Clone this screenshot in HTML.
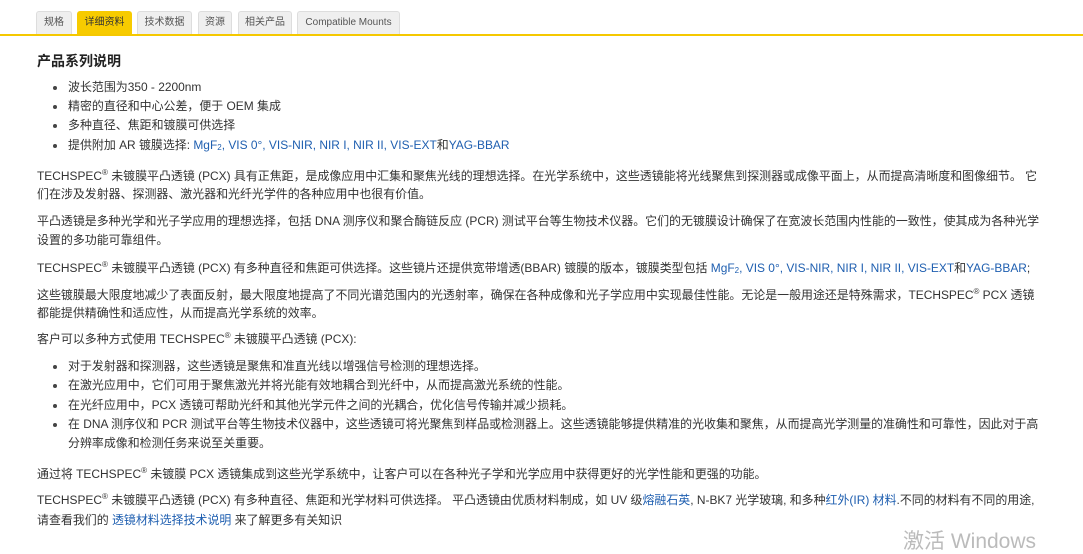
<!DOCTYPE html>
<html><head><meta charset="utf-8"><style>
body{margin:0;width:1083px;height:553px;overflow:hidden;background:#fff;font-family:"Liberation Sans","Noto Sans CJK SC",sans-serif;color:#333;font-size:11.95px}
.tabs{position:absolute;top:11px;left:0;height:23px;width:1083px;border-bottom:2px solid #f5c800}
.tab{position:absolute;top:0;height:22px;line-height:22px;background:#efefef;border:1px solid #ddd;border-bottom:none;border-radius:3px 3px 0 0;font-size:10px;color:#555;text-align:center}
.tab.a{background:#f7cb00;border-color:#f7cb00;color:#333}
.l{position:absolute;left:37px;white-space:nowrap;line-height:18px}
.b{left:68px}
.b::before{content:"";position:absolute;left:-15px;top:8px;width:4px;height:4px;border-radius:50%;background:#444}
a{color:#1f5fb0;text-decoration:none}
sup{font-size:8px;line-height:0;vertical-align:5px}
sub{font-size:8px;line-height:0;vertical-align:-1px}
h{font-weight:bold;font-size:14px;color:#222}
.w{position:absolute;left:903px;top:530px;font-size:21px;color:#bbb;line-height:24px}
</style></head><body>
<div class="tabs">
<div class="tab" style="left:36px;width:34px">规格</div>
<div class="tab a" style="left:77px;width:53px">详细资料</div>
<div class="tab" style="left:137px;width:53px">技术数据</div>
<div class="tab" style="left:198px;width:32px">资源</div>
<div class="tab" style="left:238px;width:52px">相关产品</div>
<div class="tab" style="left:297px;width:101px">Compatible Mounts</div>
</div>
<div class="l" style="top:52px"><h>产品系列说明</h></div>
<div class="l b" style="top:78px">波长范围为350 - 2200nm</div>
<div class="l b" style="top:97px">精密的直径和中心公差，便于 OEM 集成</div>
<div class="l b" style="top:116px">多种直径、焦距和镀膜可供选择</div>
<div class="l b" style="top:136px">提供附加 AR 镀膜选择: <a>MgF<sub>2</sub>, VIS 0°, VIS-NIR, NIR I, NIR II, VIS-EXT</a>和<a>YAG-BBAR</a></div>
<div class="l" style="top:167px">TECHSPEC<sup>®</sup> 未镀膜平凸透镜 (PCX) 具有正焦距，是成像应用中汇集和聚焦光线的理想选择。在光学系统中，这些透镜能将光线聚焦到探测器或成像平面上，从而提高清晰度和图像细节。 它</div>
<div class="l" style="top:185px">们在涉及发射器、探测器、激光器和光纤光学件的各种应用中也很有价值。</div>
<div class="l" style="top:212px">平凸透镜是多种光学和光子学应用的理想选择，包括 DNA 测序仪和聚合酶链反应 (PCR) 测试平台等生物技术仪器。它们的无镀膜设计确保了在宽波长范围内性能的一致性，使其成为各种光学</div>
<div class="l" style="top:231px">设置的多功能可靠组件。</div>
<div class="l" style="top:259px">TECHSPEC<sup>®</sup> 未镀膜平凸透镜 (PCX) 有多种直径和焦距可供选择。这些镜片还提供宽带增透(BBAR) 镀膜的版本，镀膜类型包括 <a>MgF<sub>2</sub>, VIS 0°, VIS-NIR, NIR I, NIR II, VIS-EXT</a>和<a>YAG-BBAR</a>;</div>
<div class="l" style="top:286px">这些镀膜最大限度地减少了表面反射，最大限度地提高了不同光谱范围内的光透射率，确保在各种成像和光子学应用中实现最佳性能。无论是一般用途还是特殊需求，TECHSPEC<sup>®</sup> PCX 透镜</div>
<div class="l" style="top:304px">都能提供精确性和适应性，从而提高光学系统的效率。</div>
<div class="l" style="top:330px">客户可以多种方式使用 TECHSPEC<sup>®</sup> 未镀膜平凸透镜 (PCX):</div>
<div class="l b" style="top:357px">对于发射器和探测器，这些透镜是聚焦和准直光线以增强信号检测的理想选择。</div>
<div class="l b" style="top:376px">在激光应用中，它们可用于聚焦激光并将光能有效地耦合到光纤中，从而提高激光系统的性能。</div>
<div class="l b" style="top:396px">在光纤应用中，PCX 透镜可帮助光纤和其他光学元件之间的光耦合，优化信号传输并减少损耗。</div>
<div class="l b" style="top:415px">在 DNA 测序仪和 PCR 测试平台等生物技术仪器中，这些透镜可将光聚焦到样品或检测器上。这些透镜能够提供精准的光收集和聚焦，从而提高光学测量的准确性和可靠性，因此对于高</div>
<div class="l" style="top:434px;left:68px">分辨率成像和检测任务来说至关重要。</div>
<div class="l" style="top:465px">通过将 TECHSPEC<sup>®</sup> 未镀膜 PCX 透镜集成到这些光学系统中，让客户可以在各种光子学和光学应用中获得更好的光学性能和更强的功能。</div>
<div class="l" style="top:491px">TECHSPEC<sup>®</sup> 未镀膜平凸透镜 (PCX) 有多种直径、焦距和光学材料可供选择。 平凸透镜由优质材料制成，如 UV 级<a>熔融石英</a>, N-BK7 光学玻璃, 和多种<a>红外(IR) 材料</a>.不同的材料有不同的用途,</div>
<div class="l" style="top:511px">请查看我们的 <a>透镜材料选择技术说明</a> 来了解更多有关知识</div>
<div class="w">激活 Windows</div>
</body></html>
